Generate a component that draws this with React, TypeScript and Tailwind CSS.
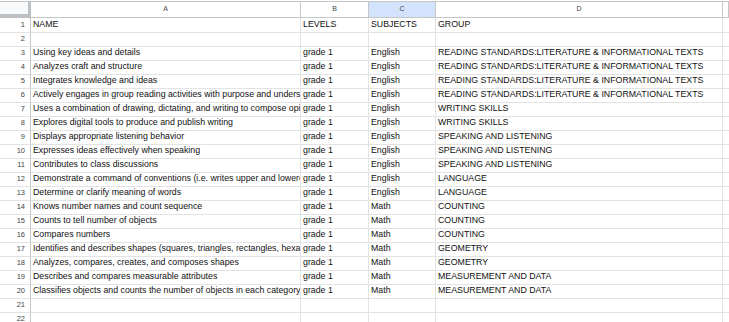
const rows: [string, string, string, string][] = [
  ['NAME', 'LEVELS', 'SUBJECTS', 'GROUP'],
  ['', '', '', ''],
  ['Using key ideas and details', 'grade 1', 'English', 'READING STANDARDS:LITERATURE & INFORMATIONAL TEXTS'],
  ['Analyzes craft and structure', 'grade 1', 'English', 'READING STANDARDS:LITERATURE & INFORMATIONAL TEXTS'],
  ['Integrates knowledge and ideas', 'grade 1', 'English', 'READING STANDARDS:LITERATURE & INFORMATIONAL TEXTS'],
  ['Actively engages in group reading activities with purpose and understanding', 'grade 1', 'English', 'READING STANDARDS:LITERATURE & INFORMATIONAL TEXTS'],
  ['Uses a combination of drawing, dictating, and writing to compose opinion pieces', 'grade 1', 'English', 'WRITING SKILLS'],
  ['Explores digital tools to produce and publish writing', 'grade 1', 'English', 'WRITING SKILLS'],
  ['Displays appropriate listening behavior', 'grade 1', 'English', 'SPEAKING AND LISTENING'],
  ['Expresses ideas effectively when speaking', 'grade 1', 'English', 'SPEAKING AND LISTENING'],
  ['Contributes to class discussions', 'grade 1', 'English', 'SPEAKING AND LISTENING'],
  ['Demonstrate a command of conventions (i.e. writes upper and lowercase letters)', 'grade 1', 'English', 'LANGUAGE'],
  ['Determine or clarify meaning of words', 'grade 1', 'English', 'LANGUAGE'],
  ['Knows number names and count sequence', 'grade 1', 'Math', 'COUNTING'],
  ['Counts to tell number of objects', 'grade 1', 'Math', 'COUNTING'],
  ['Compares numbers', 'grade 1', 'Math', 'COUNTING'],
  ['Identifies and describes shapes (squares, triangles, rectangles, hexagons, cubes)', 'grade 1', 'Math', 'GEOMETRY'],
  ['Analyzes, compares, creates, and composes shapes', 'grade 1', 'Math', 'GEOMETRY'],
  ['Describes and compares measurable attributes', 'grade 1', 'Math', 'MEASUREMENT AND DATA'],
  ['Classifies objects and counts the number of objects in each category', 'grade 1', 'Math', 'MEASUREMENT AND DATA'],
  ['', '', '', ''],
  ['', '', '', ''],
]

const cell = 'border-r border-b border-[#e3e3e3] overflow-hidden whitespace-nowrap flex items-end px-[2px] pb-[2px] text-[8.8px] leading-[11px] text-[#111]'

export default function App() {
  return (
    <div className="w-[729px] h-[322px] overflow-hidden bg-white pt-px" style={{ fontFamily: '"Liberation Sans", Arial, sans-serif' }}>
      <div className="grid grid-cols-[31px_270px_68px_67px_287px_1fr]">
        {/* Column headers */}
        <div className="h-[17px] bg-[#f8f9fa] border-t border-[#c4c7c5] border-r-[3px] border-b-[4px] border-r-[#bdc1c6] border-b-[#bdc1c6]"></div>
        {['A', 'B', 'C', 'D', ''].map((l, i) => (
          <div
            key={i}
            className={
              'h-[17px] border-t border-r border-b border-[#c4c7c5] flex items-center justify-center text-[7px] text-[#444] ' +
              (l === 'C' ? 'bg-[#d3e3fd]' : 'bg-white')
            }
          >
            {l}
          </div>
        ))}

        {/* Rows */}
        {rows.map((r, i) => (
          <div key={i} className="contents">
            <div
              className={
                'border-r border-b border-[#c4c7c5] border-b-[#e3e3e3] flex items-end justify-end pr-[5px] pb-[3px] text-[7.5px] leading-[9px] text-[#444] ' +
                (i === 0 ? 'h-[15px]' : 'h-[14px]')
              }
            >
              {i + 1}
            </div>
            {r.map((v, j) => (
              <div key={j} className={cell}>
                {v}
              </div>
            ))}
            <div className="border-b border-[#e3e3e3]"></div>
          </div>
        ))}
      </div>
    </div>
  )
}
